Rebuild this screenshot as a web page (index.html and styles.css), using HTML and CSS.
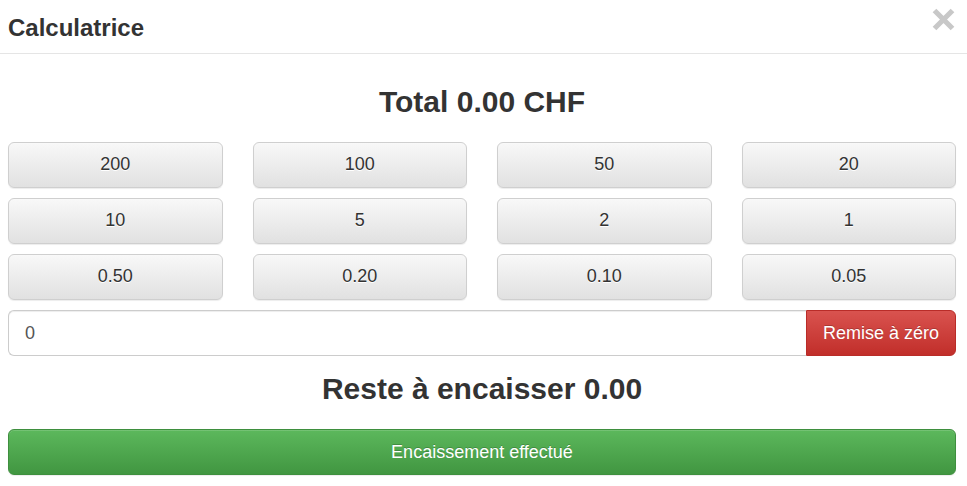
FILE: index.html
```html
<!DOCTYPE html>
<html lang="fr">
<head>
<meta charset="utf-8">
<title>Calculatrice</title>
<link rel="stylesheet" href="styles.css">
</head>
<body>
<div class="modal">
  <div class="modal-header">
    <h4 class="modal-title">Calculatrice</h4>
    <button class="close" type="button" aria-label="Fermer">
      <svg width="23" height="23" viewBox="0 0 23 23"><path d="M2.5 2.5 L20.5 20.5 M20.5 2.5 L2.5 20.5" stroke="#c8c8c8" stroke-width="5.2" fill="none"/></svg>
    </button>
  </div>
  <div class="modal-body">
    <h2 class="total">Total 0.00 CHF</h2>
    <div class="coins">
      <button class="btn">200</button>
      <button class="btn">100</button>
      <button class="btn">50</button>
      <button class="btn">20</button>
      <button class="btn">10</button>
      <button class="btn">5</button>
      <button class="btn">2</button>
      <button class="btn">1</button>
      <button class="btn">0.50</button>
      <button class="btn">0.20</button>
      <button class="btn">0.10</button>
      <button class="btn">0.05</button>
    </div>
    <div class="input-group">
      <input class="amount" type="text" value="0">
      <button class="btn-danger">Remise à zéro</button>
    </div>
    <h2 class="rest">Reste à encaisser 0.00</h2>
    <button class="btn-success">Encaissement effectué</button>
  </div>
</div>
</body>
</html>
```
FILE: styles.css
```css
* { box-sizing: border-box; }
html, body {
  margin: 0;
  padding: 0;
  background: #fff;
  font-family: "Liberation Sans", Arial, sans-serif;
  color: #333;
}
.modal {
  width: 967px;
  height: 486px;
  overflow: hidden;
}
.modal-header {
  display: flex;
  justify-content: space-between;
  align-items: flex-start;
  padding: 14px 12px 12px 8px;
  border-bottom: 1px solid #e5e5e5;
  height: 54px;
}
.modal-title {
  margin: 0;
  font-size: 24px;
  line-height: 27px;
  font-weight: bold;
  color: #333;
}
.close {
  margin-top: -6px;
  padding: 0;
  border: 0;
  background: transparent;
  width: 23px;
  height: 23px;
  line-height: 0;
  cursor: pointer;
}
.modal-body {
  padding: 0 11px 0 8px;
}
.total, .rest {
  margin: 0;
  font-size: 30px;
  line-height: 33px;
  font-weight: bold;
  text-align: center;
  color: #333;
}
.total { margin-top: 31px; margin-bottom: 24px; }
.coins {
  display: grid;
  grid-template-columns: repeat(4, 1fr);
  column-gap: 30px;
  row-gap: 10px;
}
.btn {
  height: 46px;
  padding: 9px 16px 11px;
  font-family: inherit;
  font-size: 18px;
  line-height: 24px;
  color: #333;
  border: 1px solid #cfcfcf;
  border-radius: 6px;
  background: linear-gradient(to bottom, #f8f8f8 0%, #e1e1e1 100%);
  text-shadow: 0 1px 0 #fff;
  box-shadow: inset 0 1px 0 rgba(255,255,255,.15), 0 1px 1px rgba(0,0,0,.075);
}
.input-group {
  display: flex;
  margin-top: 10px;
  height: 46px;
}
.amount {
  flex: 1;
  min-width: 0;
  height: 46px;
  padding: 10px 16px;
  font-family: inherit;
  font-size: 18px;
  color: #555;
  border: 1px solid #ccc;
  border-right: 0;
  border-radius: 6px 0 0 6px;
  box-shadow: inset 0 1px 1px rgba(0,0,0,.075);
  outline: none;
}
.btn-danger {
  height: 46px;
  padding: 10px 16px;
  font-family: inherit;
  font-size: 18px;
  line-height: 24px;
  color: #fff;
  border: 1px solid #b92c28;
  border-radius: 0 6px 6px 0;
  background: linear-gradient(to bottom, #d9534f 0%, #c12e2a 100%);
  text-shadow: 0 -1px 0 rgba(0,0,0,.2);
}
.rest { margin-top: 16px; margin-bottom: 24px; }
.btn-success {
  display: block;
  width: 100%;
  height: 46px;
  padding: 10px 16px;
  font-family: inherit;
  font-size: 18px;
  line-height: 24px;
  color: #fff;
  border: 1px solid #3e8f3e;
  border-radius: 6px;
  background: linear-gradient(to bottom, #5cb85c 0%, #419641 100%);
  text-shadow: 0 -1px 0 rgba(0,0,0,.2);
  box-shadow: inset 0 1px 0 rgba(255,255,255,.15), 0 1px 1px rgba(0,0,0,.075);
}
```
